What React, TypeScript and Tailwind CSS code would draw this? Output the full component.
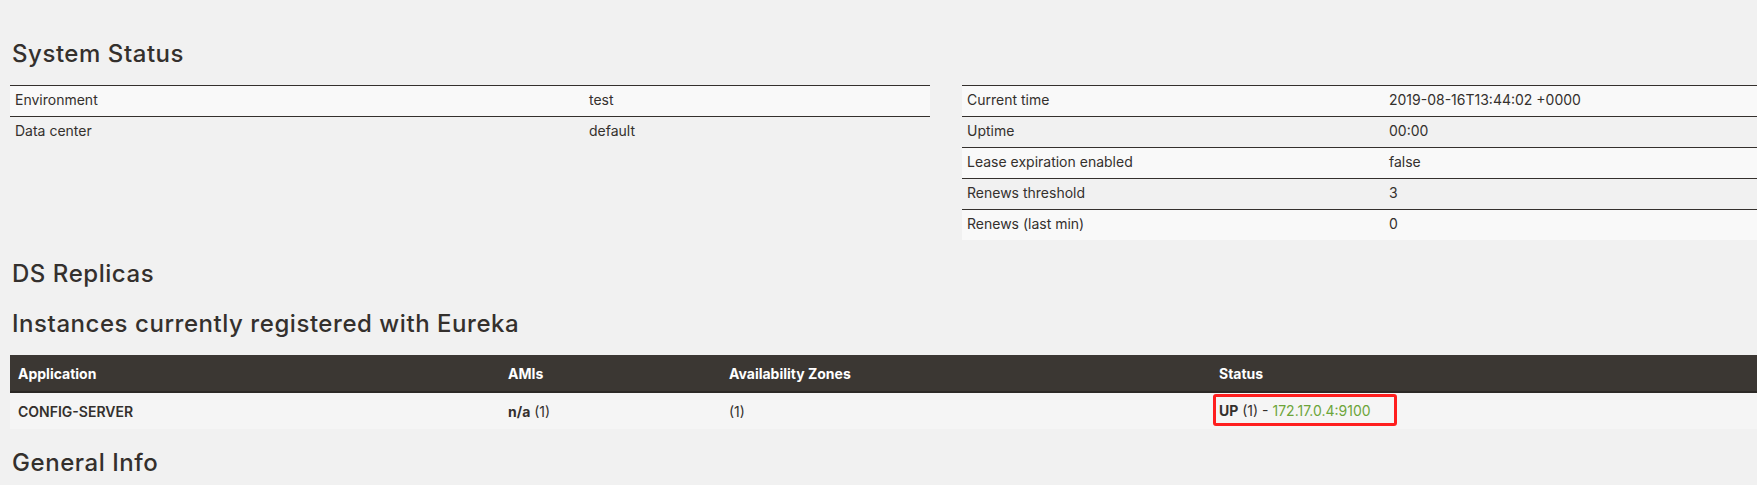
const generalRows = [
  { label: 'Environment', value: 'test' },
  { label: 'Data center', value: 'default' },
]

const statusRows = [
  { label: 'Current time', value: '2019-08-16T13:44:02 +0000' },
  { label: 'Uptime', value: '00:00' },
  { label: 'Lease expiration enabled', value: 'false' },
  { label: 'Renews threshold', value: '3' },
  { label: 'Renews (last min)', value: '0' },
]

function Heading({ children, className = '' }: { children: React.ReactNode; className?: string }) {
  return (
    <h2 className={`text-[24px] leading-[30px] font-medium tracking-[0.55px] text-[#34302d] pl-[2px] ${className}`}>
      {children}
    </h2>
  )
}

function InfoTable({
  rows,
  labelWidth,
}: {
  rows: { label: string; value: string }[]
  labelWidth: string
}) {
  return (
    <div className="w-[920px] flex-shrink-0">
      {rows.map((row, index) => (
        <div
          key={row.label}
          className={`flex border-t border-[#34302d] text-[14px] leading-[30px] text-[#34302d] ${
            index % 2 === 0 ? 'bg-[#f9f9f9]' : 'bg-[#f1f1f1]'
          }`}
        >
          <div className={`${labelWidth} pl-[5px] flex-shrink-0 -translate-y-[1px]`}>{row.label}</div>
          <div className="flex-1 pl-[5px] -translate-y-[1px]">{row.value}</div>
        </div>
      ))}
    </div>
  )
}

export default function App() {
  return (
    <div
      className="w-[1757px] h-[485px] overflow-hidden bg-[#f1f1f1]"
      style={{ fontFamily: 'Inter, "Open Sans", sans-serif' }}
    >
      <div className="w-[1900px] pl-[10px] pt-[39px]">
        <Heading>System Status</Heading>

        {/* System status tables */}
        <div className="flex gap-[32px] mt-[16px]">
          <InfoTable rows={generalRows} labelWidth="w-[574px]" />
          <InfoTable rows={statusRows} labelWidth="w-[422px]" />
        </div>

        <Heading className="mt-[19px]">DS Replicas</Heading>
        <Heading className="mt-[20px]">Instances currently registered with Eureka</Heading>

        {/* Instances */}
        <div className="w-[1872px] mt-[16px] text-[14px] text-[#34302d]">
          <div className="flex h-[38px] items-center bg-[#3b3733] border-b-2 border-[#2c2926] text-white font-bold">
            <div className="w-[490px] pl-[8px]">Application</div>
            <div className="w-[221px] pl-[8px]">AMIs</div>
            <div className="w-[490px] pl-[8px]">Availability Zones</div>
            <div className="flex-1 pl-[8px]">Status</div>
          </div>
          <div className="flex h-[36px] items-center bg-[#f5f5f5]">
            <div className="w-[490px] pl-[8px] font-semibold">CONFIG-SERVER</div>
            <div className="w-[221px] pl-[8px]">
              <b className="font-bold">n/a</b> (1)
            </div>
            <div className="w-[490px] pl-[8px]">(1)</div>
            <div className="flex-1 pl-[2px]">
              <span className="inline-flex items-center h-[32px] w-[184px] border-[3px] border-[#ff1f1f] rounded-[3px] pl-[3px] -translate-y-[1px]">
                <b className="font-bold">UP</b>
                <span className="whitespace-pre"> (1) - </span>
                <a className="text-[#6da53a]">172.17.0.4:9100</a>
              </span>
            </div>
          </div>
        </div>

        <Heading className="mt-[19px]">General Info</Heading>
      </div>
    </div>
  )
}
